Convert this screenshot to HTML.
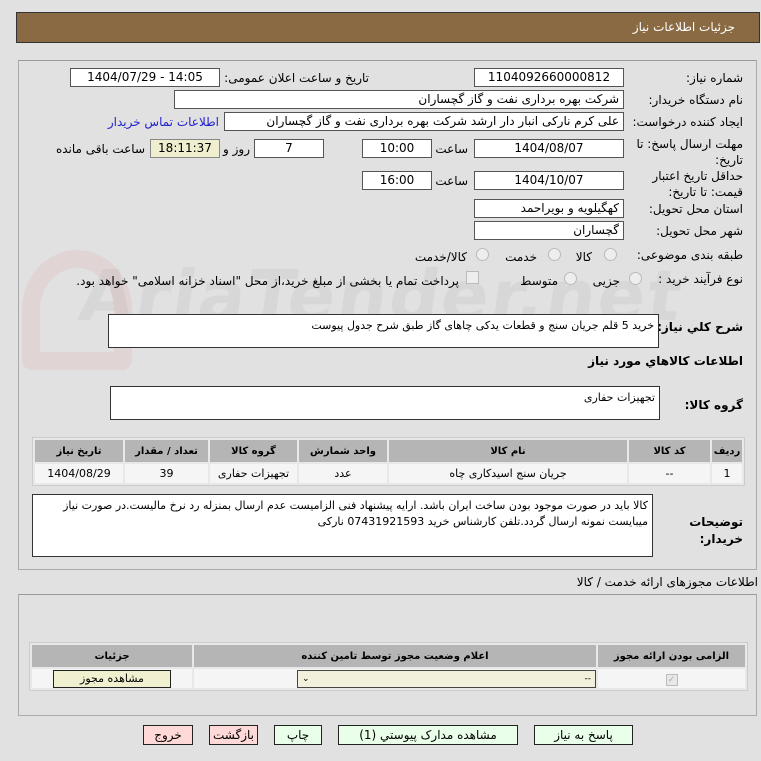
<!DOCTYPE html>
<html><head><meta charset="utf-8"><style>
*{box-sizing:border-box;margin:0;padding:0}
body{width:761px;height:761px;background:#e1e1e1;font-family:"DejaVu Sans","Liberation Sans",sans-serif;font-size:11px;color:#000;position:relative;overflow:hidden}
.a{position:absolute;white-space:nowrap}
.r{direction:rtl}
.f{position:absolute;background:#fff;border:1px solid #555;height:19px;line-height:17px;font-size:12px;text-align:center}
.fr{text-align:right;padding-right:4px;direction:rtl}
.lbl{position:absolute;direction:rtl;text-align:right;font-size:12px}
.box{position:absolute;border:1px solid #aaa;border-top-color:#999}
.ta{position:absolute;background:#fff;border:1px solid #333;direction:rtl;text-align:right;padding:3px 4px;font-size:11px;line-height:16px}
table{border-collapse:separate;border-spacing:2px;position:absolute;background:#e8e8e8;border:1px solid #ccc;direction:rtl}
th{background:#b5b5b5;font-weight:bold;font-size:10px;height:22px}
td{background:#f5f5f5;text-align:center;font-size:11px;height:19px}
.rad{position:absolute;width:13px;height:13px;border-radius:50%;border:1px solid #bbb;background:#eee}
.btn{position:absolute;height:20px;border:1px solid #222;text-align:center;line-height:18px;font-size:12px;direction:rtl}
</style></head><body>
<div class="a" style="left:16px;top:12px;width:744px;height:31px;background:#8a6a43;border:1px solid #333"></div>
<div class="a r" style="right:26px;top:20px;color:#fff;font-size:12px">جزئیات اطلاعات نیاز</div>

<div class="a" style="left:80px;top:255px;font-size:70px;font-weight:bold;color:rgba(180,180,180,0.22);letter-spacing:2px;transform:skewX(-8deg)">AriaTender.net</div>
<div class="a" style="left:22px;top:250px;width:110px;height:120px;border:18px solid rgba(220,120,120,0.12);border-radius:50% 50% 10px 10px"></div>

<div class="box" style="left:18px;top:60px;width:739px;height:510px"></div>

<div class="lbl" style="right:18px;top:71px">شماره نیاز:</div>
<div class="f" style="left:474px;top:68px;width:150px">1104092660000812</div>
<div class="lbl" style="right:392px;top:71px">تاریخ و ساعت اعلان عمومی:</div>
<div class="f" style="left:70px;top:68px;width:150px">1404/07/29 - 14:05</div>

<div class="lbl" style="right:18px;top:93px">نام دستگاه خریدار:</div>
<div class="f fr" style="left:174px;top:90px;width:450px">شرکت بهره برداری نفت و گاز گچساران</div>

<div class="lbl" style="right:18px;top:115px">ایجاد کننده درخواست:</div>
<div class="f fr" style="left:224px;top:112px;width:400px">علی کرم نارکی انبار دار ارشد شرکت بهره برداری نفت و گاز گچساران</div>
<div class="lbl" style="right:542px;top:115px;color:#2222cc">اطلاعات تماس خریدار</div>

<div class="lbl" style="right:18px;top:136px;line-height:16px">مهلت ارسال پاسخ: تا<br>تاریخ:</div>
<div class="f" style="left:474px;top:139px;width:150px">1404/08/07</div>
<div class="lbl" style="right:293px;top:142px">ساعت</div>
<div class="f" style="left:362px;top:139px;width:70px">10:00</div>
<div class="f" style="left:254px;top:139px;width:70px">7</div>
<div class="lbl" style="right:511px;top:142px">روز و</div>
<div class="f" style="left:150px;top:139px;width:70px;background:#efefcf;border-color:#888">18:11:37</div>
<div class="lbl" style="right:616px;top:142px">ساعت باقی مانده</div>

<div class="lbl" style="right:18px;top:168px;line-height:16px">حداقل تاریخ اعتبار<br>قیمت: تا تاریخ:</div>
<div class="f" style="left:474px;top:171px;width:150px">1404/10/07</div>
<div class="lbl" style="right:293px;top:174px">ساعت</div>
<div class="f" style="left:362px;top:171px;width:70px">16:00</div>

<div class="lbl" style="right:18px;top:202px">استان محل تحویل:</div>
<div class="f fr" style="left:474px;top:199px;width:150px">کهگیلویه و بویراحمد</div>
<div class="lbl" style="right:18px;top:224px">شهر محل تحویل:</div>
<div class="f fr" style="left:474px;top:221px;width:150px">گچساران</div>

<div class="lbl" style="right:18px;top:248px">طبقه بندی موضوعی:</div>
<div class="rad" style="left:604px;top:248px"></div><div class="lbl" style="right:169px;top:250px">کالا</div>
<div class="rad" style="left:548px;top:248px"></div><div class="lbl" style="right:224px;top:250px">خدمت</div>
<div class="rad" style="left:476px;top:248px"></div><div class="lbl" style="right:294px;top:250px">کالا/خدمت</div>

<div class="lbl" style="right:18px;top:272px">نوع فرآیند خرید :</div>
<div class="rad" style="left:629px;top:272px"></div><div class="lbl" style="right:141px;top:274px">جزیی</div>
<div class="rad" style="left:564px;top:272px"></div><div class="lbl" style="right:203px;top:274px">متوسط</div>
<div class="a" style="left:466px;top:271px;width:13px;height:13px;border:1px solid #bbb;background:#eee"></div>
<div class="lbl" style="right:302px;top:274px">پرداخت تمام یا بخشی از مبلغ خرید،از محل "اسناد خزانه اسلامی" خواهد بود.</div>

<div class="lbl" style="right:18px;top:320px;font-weight:bold">شرح کلي نياز:</div>
<div class="ta" style="left:108px;top:314px;width:551px;height:34px">خرید 5 قلم جریان سنج و قطعات یدکی چاهای گاز طبق شرح جدول پیوست</div>
<div class="lbl" style="right:18px;top:354px;font-weight:bold">اطلاعات کالاهاي مورد نياز</div>
<div class="lbl" style="right:18px;top:398px;font-weight:bold">گروه کالا:</div>
<div class="ta" style="left:110px;top:386px;width:550px;height:34px">تجهیزات حفاری</div>

<table style="left:32px;top:437px;width:713px">
<tr><th style="width:30px">ردیف</th><th style="width:81px">کد کالا</th><th style="width:238px">نام کالا</th><th style="width:88px">واحد شمارش</th><th style="width:87px">گروه کالا</th><th style="width:83px">تعداد / مقدار</th><th>تاریخ نیاز</th></tr>
<tr><td>1</td><td>--</td><td>جریان سنج اسیدکاری چاه</td><td>عدد</td><td>تجهیزات حفاری</td><td>39</td><td>1404/08/29</td></tr>
</table>

<div class="lbl" style="right:18px;top:514px;font-weight:bold;line-height:17px">توضیحات<br>خریدار:</div>
<div class="ta" style="left:32px;top:494px;width:621px;height:63px">کالا باید در صورت موجود بودن ساخت ایران باشد. ارایه پیشنهاد فنی الزامیست عدم ارسال بمنزله رد نرخ مالیست.در صورت نیاز میبایست نمونه ارسال گردد.تلفن کارشناس خرید 07431921593 نارکی</div>

<div class="lbl" style="right:3px;top:575px">اطلاعات مجوزهای ارائه خدمت / کالا</div>
<div class="box" style="left:18px;top:594px;width:739px;height:122px"></div>
<table style="left:29px;top:642px;width:719px">
<tr><th style="width:147px">الزامی بودن ارائه مجوز</th><th style="width:402px">اعلام وضعیت مجوز توسط تامین کننده</th><th>جزئیات</th></tr>
<tr><td><span style="display:inline-block;width:12px;height:12px;border:1px solid #bbb;background:#e8e8e8;color:#aaa;font-size:9px;line-height:10px">✓</span></td>
<td><div style="margin-left:52px;width:299px;height:18px;border:1px solid #444;background:#f0f0dc;direction:ltr;text-align:left;padding-left:4px;line-height:16px;font-size:9px;position:relative">⌄<span style="position:absolute;right:4px">--</span></div></td>
<td><div style="margin:0 auto;width:118px;height:18px;border:1px solid #222;background:#f0f0d0;line-height:16px">مشاهده مجوز</div></td></tr>
</table>

<div class="btn" style="left:534px;top:725px;width:99px;background:#eaffea">پاسخ به نیاز</div>
<div class="btn" style="left:338px;top:725px;width:180px;background:#eaffea">مشاهده مدارک پیوستي (1)</div>
<div class="btn" style="left:274px;top:725px;width:48px;background:#eaffea">چاپ</div>
<div class="btn" style="left:209px;top:725px;width:49px;background:#ffd8d8">بازگشت</div>
<div class="btn" style="left:143px;top:725px;width:50px;background:#ffd8d8">خروج</div>
</body></html>
